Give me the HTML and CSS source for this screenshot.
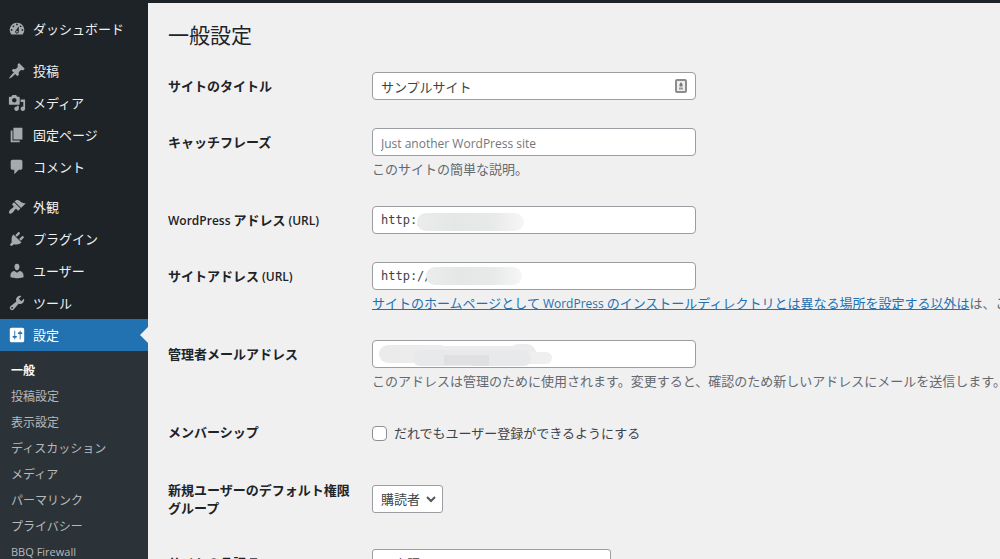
FILE: index.html
```
<!DOCTYPE html>
<html lang="ja">
<head>
<meta charset="utf-8">
<title>一般設定</title>
<link rel="stylesheet" href="styles.css">
</head>
<body>
<div class="topbar"></div>
<div class="layout">
  <nav class="sidebar">
    <ul class="menu menu-home">
      <li><a class="menu-link" href="#"><svg class="icon" viewBox="0 0 20 20"><path fill-rule="evenodd" d="M3.76 16h12.48A7.998 7.998 0 0 0 10 3a7.998 7.998 0 0 0-6.24 13zM10 4c.55 0 1 .45 1 1s-.45 1-1 1-1-.45-1-1 .45-1 1-1zM6 6c.55 0 1 .45 1 1s-.45 1-1 1-1-.45-1-1 .45-1 1-1zm8 0c.55 0 1 .45 1 1s-.45 1-1 1-1-.45-1-1 .45-1 1-1zm-5.37 5.55L12 7v6c0 1.1-.9 2-2 2s-2-.9-2-2c0-.57.24-1.08.63-1.45zM4 10c.55 0 1 .45 1 1s-.45 1-1 1-1-.45-1-1 .45-1 1-1zm12 0c.55 0 1 .45 1 1s-.45 1-1 1-1-.45-1-1 .45-1 1-1zm-5 3c0-.55-.45-1-1-1s-1 .45-1 1 .45 1 1 1 1-.45 1-1z"/></svg>ダッシュボード</a></li>
    </ul>
    <ul class="menu menu-content">
      <li><a class="menu-link" href="#"><svg class="icon" viewBox="0 0 20 20"><path d="M10.44 3.02l1.82-1.82 6.36 6.35-1.83 1.82c-1.05-.68-2.48-.57-3.41.36l-.75.75c-.92.93-1.04 2.35-.35 3.41l-1.83 1.82-2.41-2.41-2.8 2.79c-.42.42-3.38 2.71-3.8 2.29s1.86-3.39 2.28-3.81l2.79-2.79L4.1 9.36l1.83-1.82c1.05.69 2.48.57 3.4-.36l.75-.75c.93-.92 1.05-2.35.36-3.41z"/></svg>投稿</a></li>
      <li><a class="menu-link" href="#"><svg class="icon" viewBox="0 0 20 20"><path fill-rule="evenodd" d="M13 11V4c0-.55-.45-1-1-1h-1.67L9 1H5L3.67 3H2c-.55 0-1 .45-1 1v7c0 .55.45 1 1 1h10c.55 0 1-.45 1-1zM7 4.5c1.38 0 2.5 1.12 2.5 2.5S8.38 9.5 7 9.5 4.5 8.38 4.5 7 5.62 4.5 7 4.5zM14 6h5v10.5c0 1.38-1.12 2.5-2.5 2.5S14 17.88 14 16.5s1.12-2.5 2.5-2.5c.17 0 .34.02.5.05V9h-3V6zm-4 8.05V13h2v3.5c0 1.38-1.12 2.5-2.5 2.5S7 17.88 7 16.5 8.12 14 9.5 14c.17 0 .34.02.5.05z"/></svg>メディア</a></li>
      <li><a class="menu-link" href="#"><svg class="icon" viewBox="0 0 20 20"><path d="M6 15V2h10v13H6zm-1 1h8v2H3V5h2v11z"/></svg>固定ページ</a></li>
      <li><a class="menu-link" href="#"><svg class="icon" viewBox="0 0 20 20"><path d="M5 2h9c1.1 0 2 .9 2 2v7c0 1.1-.9 2-2 2h-2l-5 5v-5H5c-1.1 0-2-.9-2-2V4c0-1.1.9-2 2-2z"/></svg>コメント</a></li>
    </ul>
    <ul class="menu">
      <li><a class="menu-link" href="#"><svg class="icon" viewBox="0 0 20 20"><path d="M14.48 11.06L7.41 3.99l1.5-1.5c.5-.56 2.3-.47 3.51.32 1.21.8 1.43 1.28 2.91 2.1 1.18.64 2.45 1.26 4.45.85zm-.71.71L6.7 4.7 4.93 6.47c-.39.39-.39 1.02 0 1.41l1.06 1.06c.39.39.39 1.03 0 1.42-.6.6-1.43 1.11-2.21 1.69-.35.26-.7.53-1.01.84C1.43 14.23.4 16.08 1.4 17.07c.99 1 2.84-.03 4.18-1.36.31-.31.58-.66.85-1.02.57-.78 1.08-1.61 1.69-2.21.39-.39 1.02-.39 1.41 0l1.06 1.06c.39.39 1.02.39 1.41 0z"/></svg>外観</a></li>
      <li><a class="menu-link" href="#"><svg class="icon" viewBox="0 0 20 20"><path d="M13.11 4.36L9.87 7.6 8 5.73l3.24-3.24c.35-.34 1.05-.2 1.56.32.52.51.66 1.21.31 1.55zm-8 1.77l.91-1.12 9.01 9.01-1.19.84c-.71.71-2.63 1.16-3.82 1.16H6.14L4.9 17.26c-.59.59-1.54.59-2.12 0-.59-.58-.59-1.53 0-2.12l1.24-1.24v-3.88c0-1.13.4-3.19 1.09-3.89zm7.26 3.97l3.24-3.24c.34-.35 1.04-.21 1.55.31.52.51.66 1.21.31 1.55l-3.24 3.25z"/></svg>プラグイン</a></li>
      <li><a class="menu-link" href="#"><svg class="icon" viewBox="0 0 20 20"><path d="M10 9.25c-2.27 0-2.73-3.44-2.73-3.44C7 4.02 7.82 2 9.97 2c2.16 0 2.98 2.02 2.71 3.81 0 0-.41 3.44-2.68 3.44zm0 2.57L12.72 10c2.39 0 4.52 2.33 4.52 4.53v2.49s-3.65 1.13-7.24 1.13c-3.65 0-7.24-1.13-7.24-1.13v-2.49c0-2.25 1.94-4.48 4.47-4.48z"/></svg>ユーザー</a></li>
      <li><a class="menu-link" href="#"><svg class="icon" viewBox="0 0 20 20"><path fill-rule="evenodd" d="M16.68 9.77c-1.34 1.34-3.3 1.67-4.95.99l-5.41 6.52c-.99.99-2.59.99-3.58 0s-.99-2.59 0-3.57l6.52-5.42c-.68-1.65-.35-3.61.99-4.95 1.28-1.28 3.12-1.62 4.72-1.06l-2.89 2.89 2.82 2.82 2.86-2.87c.53 1.58.18 3.39-1.08 4.65zM3.81 16.21c.4.39 1.04.39 1.43 0 .4-.4.4-1.04 0-1.43-.39-.4-1.03-.4-1.43 0-.39.39-.39 1.03 0 1.43z"/></svg>ツール</a></li>
      <li><a class="menu-link menu-link-current" href="#"><svg class="icon" viewBox="0 0 20 20"><path fill-rule="evenodd" d="M18 16V4c0-1.1-.9-2-2-2H4c-1.1 0-2 .9-2 2v12c0 1.1.9 2 2 2h12c1.1 0 2-.9 2-2zM8 11h1c.55 0 1 .45 1 1s-.45 1-1 1H8v1.5c0 .28-.22.5-.5.5s-.5-.22-.5-.5V13H6c-.55 0-1-.45-1-1s.45-1 1-1h1V5.5c0-.28.22-.5.5-.5s.5.22.5.5V11zm5-2h-1c-.55 0-1-.45-1-1s.45-1 1-1h1V5.5c0-.28.22-.5.5-.5s.5.22.5.5V7h1c.55 0 1 .45 1 1s-.45 1-1 1h-1v5.5c0 .28-.22.5-.5.5s-.5-.22-.5-.5V9z"/></svg>設定</a>
        <ul class="submenu">
          <li><a class="submenu-link submenu-link-current" href="#">一般</a></li>
          <li><a class="submenu-link" href="#">投稿設定</a></li>
          <li><a class="submenu-link" href="#">表示設定</a></li>
          <li><a class="submenu-link" href="#">ディスカッション</a></li>
          <li><a class="submenu-link" href="#">メディア</a></li>
          <li><a class="submenu-link" href="#">パーマリンク</a></li>
          <li><a class="submenu-link" href="#">プライバシー</a></li>
          <li><a class="submenu-link submenu-link-latin" href="#">BBQ Firewall</a></li>
        </ul>
      </li>
    </ul>
  </nav>
  <main class="content">
    <h1 class="title">一般設定</h1>
    <form>
      <table class="form-table">
        <tr>
          <th scope="row"><label for="blogname">サイトのタイトル</label></th>
          <td>
            <div class="field">
              <input class="text" type="text" id="blogname" value="サンプルサイト">
              <svg class="autofill" viewBox="0 0 12 14"><rect x="1" y="1" width="10" height="12" rx="1" fill="#eee" stroke="#8c8c8c" stroke-width="2"/><path fill="#777" d="M6 3l1.500 2.500v2h-3v-2z"/><path fill="#999" d="M4 8.500h4v2H4z"/></svg>
            </div>
          </td>
        </tr>
        <tr>
          <th scope="row"><label for="tagline">キャッチフレーズ</label></th>
          <td>
            <div class="field"><input class="text" type="text" id="tagline" placeholder="Just another WordPress site"></div>
            <p class="description">このサイトの簡単な説明。</p>
          </td>
        </tr>
        <tr>
          <th scope="row"><label for="siteurl"><span class="latin">WordPress</span> アドレス <span class="latin">(URL)</span></label></th>
          <td>
            <div class="field">
              <input class="text code" type="text" id="siteurl" value="http:/">
              <span class="mask mask-siteurl"></span>
            </div>
          </td>
        </tr>
        <tr>
          <th scope="row"><label for="home">サイトアドレス <span class="latin">(URL)</span></label></th>
          <td>
            <div class="field">
              <input class="text code" type="text" id="home" value="http://">
              <span class="mask mask-home"></span>
            </div>
            <p class="description"><a class="help-link" href="#">サイトのホームページとして <span class="latin-regular">WordPress</span> のインストールディレクトリとは異なる場所を設定する以外は</a>は、こ</p>
          </td>
        </tr>
        <tr>
          <th scope="row"><label for="email">管理者メールアドレス</label></th>
          <td>
            <div class="field">
              <input class="text" type="text" id="email">
              <svg class="mask-email" viewBox="0 0 176 26">
                <rect x="0" y="3" width="70" height="18" rx="9" fill="#ebebec"/>
                <rect x="20" y="4" width="137" height="16" rx="8" fill="#ececed"/>
                <rect x="130" y="2" width="27" height="20" rx="9" fill="#ebeceb"/>
                <rect x="140" y="10" width="33" height="12" rx="6" fill="#efefef"/>
                <rect x="34" y="8" width="118" height="16" rx="7" fill="#e8e9ea"/>
                <path fill="#e0e0e2" d="M65 13h45v11H94v-1H65z"/>
              </svg>
            </div>
            <p class="description">このアドレスは管理のために使用されます。変更すると、確認のため新しいアドレスにメールを送信します。</p>
          </td>
        </tr>
        <tr>
          <th scope="row">メンバーシップ</th>
          <td><label class="check"><input class="check-box" type="checkbox">だれでもユーザー登録ができるようにする</label></td>
        </tr>
        <tr>
          <th scope="row"><label for="role">新規ユーザーのデフォルト権限グループ</label></th>
          <td>
            <div class="select-wrap">
              <select class="select" id="role"><option>購読者</option></select>
              <svg class="chevron" viewBox="0 0 12 12"><path d="M2 4l4 4 4-4"/></svg>
            </div>
          </td>
        </tr>
        <tr>
          <th scope="row"><label for="language">サイトの言語 <svg class="language-icon" viewBox="0 0 14 14"><path d="M1 1h7l1 3h4v9H6l-1-3H1z"/></svg></label></th>
          <td>
            <div class="select-wrap">
              <select class="select select-wide" id="language"><option>日本語</option></select>
              <svg class="chevron" viewBox="0 0 12 12"><path d="M2 4l4 4 4-4"/></svg>
            </div>
          </td>
        </tr>
      </table>
    </form>
  </main>
</div>
</body>
</html>
```

FILE: styles.css
```
* {
  box-sizing: border-box;
}

html,
body {
  height: 100%;
}

body {
  margin: 0;
  display: flex;
  flex-direction: column;
  overflow: hidden;
  background: #f0f0f1;
  color: #3c434a;
  font: 13px/18px "Noto Sans CJK JP", sans-serif;
}

ul {
  margin: 0;
  padding: 0;
  list-style: none;
}

.topbar {
  flex: none;
  height: 3px;
  background: #1d2327;
}

.layout {
  flex: 1;
  min-height: 0;
  display: flex;
}

.sidebar {
  flex: none;
  width: 148px;
  padding-top: 10px;
  overflow: hidden;
  background: #1d2327;
}

.menu-home {
  margin-bottom: 10px;
}

.menu-content {
  margin-bottom: 8px;
}

.menu-link {
  position: relative;
  display: flex;
  align-items: center;
  gap: 7px;
  height: 32px;
  padding-left: 8px;
  color: #f0f0f1;
  text-decoration: none;
}

.icon {
  flex: none;
  width: 18px;
  height: 18px;
  fill: #a7aaad;
}

.menu-link-current {
  background: #2271b1;
  color: #fff;
}

.menu-link-current .icon {
  fill: #fff;
}

.menu-link-current::after {
  content: "";
  position: absolute;
  top: 8px;
  right: 0;
  border: 8px solid transparent;
  border-left-width: 0;
  border-right-color: #f0f0f1;
}

.submenu {
  padding: 6px 0;
  background: #2c3338;
}

.submenu-link {
  display: block;
  padding-left: 11px;
  color: #b6b9bc;
  font-size: 12px;
  line-height: 26px;
  text-decoration: none;
}

.submenu-link-current {
  color: #fff;
  font-weight: 700;
}

.submenu-link-latin {
  font-family: "Open Sans", sans-serif;
  font-size: 11px;
}

.content {
  flex: 1;
  min-width: 0;
  padding: 15px 0 0 20px;
  overflow: hidden;
}

.title {
  margin: 0;
  color: #1d2327;
  font-size: 21px;
  font-weight: 400;
  line-height: 32px;
}

.form-table {
  width: 100%;
  margin-top: 8px;
  border-collapse: collapse;
  table-layout: fixed;
}

.form-table th {
  width: 204px;
  padding: 19px 16px 18px 0;
  color: #1d2327;
  font-weight: 700;
  text-align: left;
  vertical-align: top;
}

.form-table td {
  padding: 14px 0;
  vertical-align: middle;
}

.latin,
.latin-regular {
  font-family: "Open Sans", sans-serif;
  font-size: 12px;
  line-height: 1;
}

.latin {
  font-weight: 600;
}

.field {
  position: relative;
  max-width: 324px;
}

.text {
  display: block;
  width: 100%;
  height: 28px;
  padding: 0 8px;
  border: 1px solid #9a9da1;
  border-radius: 4px;
  background: #fff;
  color: #3c434a;
  font: inherit;
}

.text::placeholder {
  color: #72777c;
  font-family: "Open Sans", sans-serif;
  font-size: 12px;
}

.code {
  font-family: "DejaVu Sans Mono", monospace;
  font-size: 12px;
}

.autofill {
  position: absolute;
  top: 7px;
  right: 9px;
  width: 12px;
  height: 14px;
}

.mask {
  position: absolute;
  height: 18px;
  border-radius: 9px;
  background: linear-gradient(90deg, #ebecec, #e5e6e6 35%, #e8e9e9 70%, #f6f6f6);
}

.mask-siteurl {
  top: 7px;
  left: 45px;
  width: 107px;
}

.mask-home {
  top: 5px;
  left: 54px;
  width: 96px;
}

.mask-email {
  position: absolute;
  top: 2px;
  left: 7px;
  width: 176px;
  height: 26px;
}

.description {
  margin: 4px 0 0;
  color: #646970;
  white-space: nowrap;
}

.help-link {
  color: #2271b1;
}

.check {
  display: flex;
  align-items: center;
  gap: 7px;
  height: 30px;
}

.check-box {
  appearance: none;
  width: 15px;
  height: 15px;
  margin: 0;
  border: 1px solid #8c8f94;
  border-radius: 4px;
  background: #fff;
}

.select-wrap {
  position: relative;
  width: fit-content;
}

.select {
  appearance: none;
  display: block;
  height: 28px;
  padding: 0 21px 0 8px;
  border: 1px solid #9a9da1;
  border-radius: 3px;
  background: #fff;
  color: #3c434a;
  font: inherit;
}

.select-wide {
  width: 239px;
  height: 30px;
}

.chevron {
  position: absolute;
  top: 8px;
  right: 6px;
  width: 12px;
  height: 12px;
  fill: none;
  stroke: #50575e;
  stroke-width: 2;
  pointer-events: none;
}

.select-wide + .chevron {
  top: 9px;
}

.language-icon {
  width: 14px;
  height: 14px;
  vertical-align: middle;
  fill: #50575e;
}
```
